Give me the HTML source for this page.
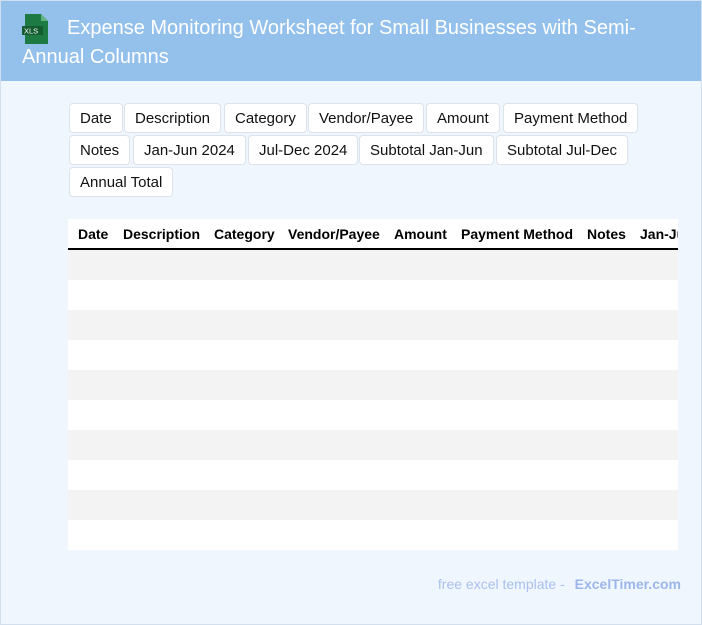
<!DOCTYPE html>
<html><head><meta charset="utf-8"><style>
*{margin:0;padding:0;box-sizing:border-box}
body{width:702px;height:625px;background:#f0f6fe;font-family:"Liberation Sans",Arial,sans-serif;position:relative;overflow:hidden}
.frame{position:absolute;left:0;top:0;width:702px;height:625px;border:1px solid #d3dfec;pointer-events:none}
.hdr{position:absolute;left:0;top:0;width:702px;height:81px;background:#93c1ec}
.title{position:absolute;left:22px;top:14px;width:660px;color:#fff;font-size:20px;line-height:29px;text-indent:45px}
.tag{position:absolute;height:30px;border:1px solid #dde3ea;border-radius:4px;background:#fff;font-size:15px;line-height:30px;padding:0 10px;color:#111;white-space:nowrap}
.tbl{position:absolute;left:68px;top:219px;width:610px;height:331px;background:#fff;overflow:hidden}
.th{position:absolute;top:7px;font-size:14px;font-weight:bold;color:#000;white-space:nowrap}
.line{position:absolute;left:0;top:29px;width:610px;height:2px;background:#000}
.row{position:absolute;left:0;width:610px;height:30px}
.ft{position:absolute;right:21px;top:576px;font-size:14px;color:#abc0ef}
.ft b{color:#9cb6ea;margin-left:6px}
</style></head><body>
<div class="hdr"></div>
<svg style="position:absolute;left:22px;top:14px" width="28" height="30" viewBox="0 0 28 30"><path d="M3 0h16l7 7v23H3z" fill="#1e7a43"/><path d="M19 0v7h7z" fill="#5fb37e"/><rect x="0" y="12" width="21" height="9" fill="#155c31"/><text x="2" y="19.5" font-size="7.5" fill="#fff" font-family="Liberation Sans">XLS</text></svg>
<div class="title">Expense Monitoring Worksheet for Small Businesses with Semi-Annual Columns</div>
<div class="tag" style="left:69px;top:103px">Date</div>
<div class="tag" style="left:124px;top:103px">Description</div>
<div class="tag" style="left:224px;top:103px">Category</div>
<div class="tag" style="left:308px;top:103px">Vendor/Payee</div>
<div class="tag" style="left:426px;top:103px">Amount</div>
<div class="tag" style="left:503px;top:103px">Payment Method</div>
<div class="tag" style="left:69px;top:135px">Notes</div>
<div class="tag" style="left:133px;top:135px">Jan-Jun 2024</div>
<div class="tag" style="left:248px;top:135px">Jul-Dec 2024</div>
<div class="tag" style="left:359px;top:135px">Subtotal Jan-Jun</div>
<div class="tag" style="left:496px;top:135px">Subtotal Jul-Dec</div>
<div class="tag" style="left:69px;top:167px">Annual Total</div>
<div class="tbl">
<div class="th" style="left:10px">Date</div>
<div class="th" style="left:55px">Description</div>
<div class="th" style="left:146px">Category</div>
<div class="th" style="left:220px">Vendor/Payee</div>
<div class="th" style="left:326px">Amount</div>
<div class="th" style="left:393px">Payment Method</div>
<div class="th" style="left:519px">Notes</div>
<div class="th" style="left:572px">Jan-Jun 2024</div>
<div class="line"></div>
<div class="row" style="top:31px;background:#f3f3f3"></div>
<div class="row" style="top:91px;background:#f3f3f3"></div>
<div class="row" style="top:151px;background:#f3f3f3"></div>
<div class="row" style="top:211px;background:#f3f3f3"></div>
<div class="row" style="top:271px;background:#f3f3f3"></div>
</div>
<div class="ft">free excel template - <b>ExcelTimer.com</b></div>
<div class="frame"></div>
</body></html>
